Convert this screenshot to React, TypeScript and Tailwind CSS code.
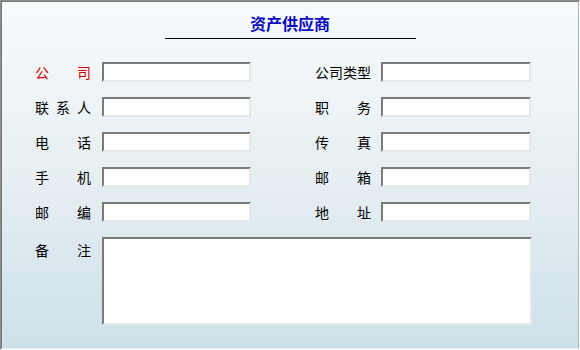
import React from "react";

const font = { fontFamily: '"Noto Sans CJK SC", "Noto Sans", sans-serif' };

function Label({ chars, red }: { chars: string[]; red?: boolean }) {
  return (
    <div
      className={`flex w-[56px] shrink-0 justify-between text-[14px] leading-[20px] ${
        red ? "text-[#d40000]" : "text-black"
      }`}
    >
      {chars.map((c, i) => (
        <span key={i}>{c}</span>
      ))}
    </div>
  );
}

function Field({ w }: { w: string }) {
  return (
    <input
      className={`h-[20px] ${w} shrink-0 border-2 border-t-[#7a7a7a] border-l-[#7a7a7a] border-r-[#e6e9eb] border-b-[#e6e9eb] bg-white outline-none`}
    />
  );
}

export default function App() {
  const rows: [string[], boolean, string[]][] = [
    [["公", "司"], true, ["公", "司", "类", "型"]],
    [["联", "系", "人"], false, ["职", "务"]],
    [["电", "话"], false, ["传", "真"]],
    [["手", "机"], false, ["邮", "箱"]],
    [["邮", "编"], false, ["地", "址"]],
  ];
  return (
    <div style={font} className="w-[580px] h-[350px] border border-t-[#8a8a8a] border-l-[#8a8a8a] border-r-white border-b-white">
      <div className="h-full w-full border border-t-[#7a7a7a] border-l-[#7a7a7a] border-r-[#a9b6bd] border-b-[#e4edf1] bg-gradient-to-b from-[#f7fafb] via-[#e7eff3] to-[#cde0e9]">
        <div className="pt-[13px] text-center text-[16px] leading-[16px] font-bold text-[#0a0ac0]">资产供应商</div>
        <div className="mx-auto mt-[7px] h-px w-[251px] bg-black" />
        <div className="mt-[23px] flex flex-col gap-[15px] pl-[33px]">
          {rows.map(([l, red, r], i) => (
            <div key={i} className="flex items-center">
              <div className="flex items-center gap-[11px]">
                <Label chars={l} red={red} />
                <Field w="w-[149px]" />
              </div>
              <div className="ml-[64px] flex items-center gap-[10px]">
                <Label chars={r} />
                <Field w="w-[150px]" />
              </div>
            </div>
          ))}
          <div className="flex items-start gap-[11px]">
            <div className="pt-[3px]">
              <Label chars={["备", "注"]} />
            </div>
            <textarea className="h-[88px] w-[430px] resize-none border-2 border-t-[#7a7a7a] border-l-[#7a7a7a] border-r-[#e6e9eb] border-b-[#e6e9eb] bg-white outline-none" />
          </div>
        </div>
      </div>
    </div>
  );
}
